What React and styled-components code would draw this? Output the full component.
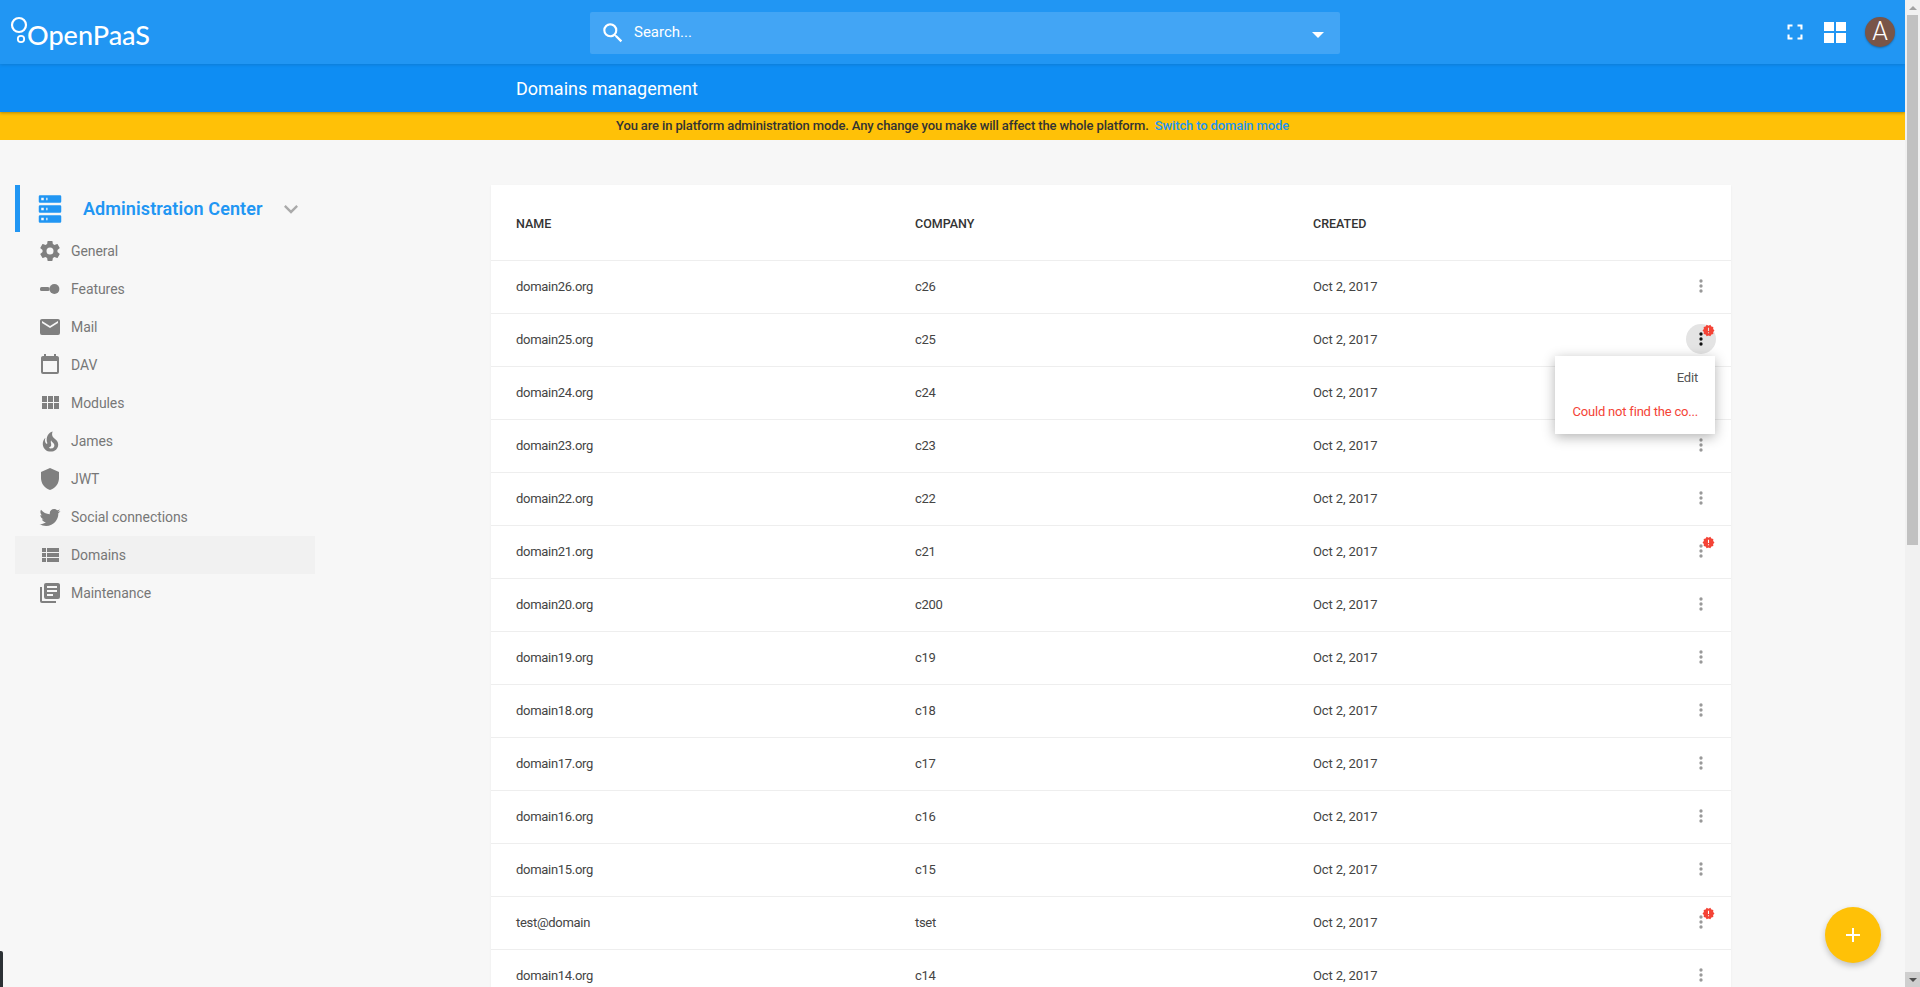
import React from 'react'
import styled, { createGlobalStyle } from 'styled-components'
import { MdSearch, MdKeyboardArrowDown } from 'react-icons/md'

const GlobalStyle = createGlobalStyle`
html, body {
    margin: 0;
    height: 100%;
    overflow: hidden;
    background: #f7f7f7;
    font-family: Roboto, "Liberation Sans", sans-serif;
}
`

const paths = {
    cog: 'M12,15.5A3.5,3.5 0 0,1 8.5,12A3.5,3.5 0 0,1 12,8.5A3.5,3.5 0 0,1 15.5,12A3.5,3.5 0 0,1 12,15.5M19.43,12.97C19.47,12.65 19.5,12.33 19.5,12C19.5,11.67 19.47,11.34 19.43,11L21.54,9.37C21.73,9.22 21.78,8.95 21.66,8.73L19.66,5.27C19.54,5.05 19.27,4.96 19.05,5.05L16.56,6.05C16.04,5.66 15.5,5.32 14.87,5.07L14.5,2.42C14.46,2.18 14.25,2 14,2H10C9.75,2 9.54,2.18 9.5,2.42L9.13,5.07C8.5,5.32 7.96,5.66 7.44,6.05L4.95,5.05C4.73,4.96 4.46,5.05 4.34,5.27L2.34,8.73C2.21,8.95 2.27,9.22 2.46,9.37L4.57,11C4.53,11.34 4.5,11.67 4.5,12C4.5,12.33 4.53,12.65 4.57,12.97L2.46,14.63C2.27,14.78 2.21,15.05 2.34,15.27L4.34,18.73C4.46,18.95 4.73,19.03 4.95,18.95L7.44,17.94C7.96,18.34 8.5,18.68 9.13,18.93L9.5,21.58C9.54,21.82 9.75,22 10,22H14C14.25,22 14.46,21.82 14.5,21.58L14.87,18.93C15.5,18.67 16.04,18.34 16.56,17.94L19.05,18.95C19.27,19.03 19.54,18.95 19.66,18.73L21.66,15.27C21.78,15.05 21.73,14.78 21.54,14.63L19.43,12.97Z',
    mail: 'M20,8L12,13L4,8V6L12,11L20,6M20,4H4C2.89,4 2,4.89 2,6V18A2,2 0 0,0 4,20H20A2,2 0 0,0 22,18V6C22,4.89 21.1,4 20,4Z',
    calendar: 'M19,19H5V8H19M16,1V3H8V1H6V3H5C3.89,3 3,3.89 3,5V19A2,2 0 0,0 5,21H19A2,2 0 0,0 21,19V5C21,3.89 20.1,3 19,3H18V1',
    modules: 'M16,5V11H21V5M10,11H15V5H10M16,18H21V12H16M10,18H15V12H10M4,18H9V12H4M4,11H9V5H4V11Z',
    fire: 'M17.55,11.2C17.32,10.9 17.05,10.64 16.79,10.38C16.14,9.78 15.39,9.35 14.76,8.72C13.3,7.26 13,4.85 13.91,3C13,3.23 12.16,3.75 11.46,4.32C8.92,6.4 7.92,10.07 9.12,13.22C9.16,13.32 9.2,13.42 9.2,13.55C9.2,13.77 9.05,13.97 8.85,14.05C8.63,14.15 8.39,14.09 8.21,13.93C8.15,13.88 8.11,13.83 8.06,13.76C6.96,12.33 6.78,10.28 7.54,8.64C5.89,10 5,12.3 5.14,14.47C5.18,14.97 5.24,15.47 5.41,15.97C5.55,16.57 5.81,17.17 6.13,17.7C7.17,19.43 9,20.67 10.97,20.92C13.07,21.19 15.32,20.8 16.93,19.32C18.73,17.66 19.38,15 18.43,12.72L18.3,12.46C18.1,12 17.83,11.59 17.5,11.2H17.55M14.45,17.5C14.17,17.74 13.72,18 13.37,18.1C12.27,18.5 11.17,17.94 10.5,17.28C11.69,17 12.4,16.12 12.61,15.23C12.78,14.43 12.46,13.77 12.33,13C12.21,12.26 12.23,11.63 12.5,10.94C12.69,11.32 12.89,11.7 13.13,12C13.9,13 15.11,13.44 15.37,14.8C15.41,14.94 15.43,15.08 15.43,15.23C15.46,16.05 15.1,16.95 14.45,17.5H14.45Z',
    shield: 'M12,1L3,5V11C3,16.55 6.84,21.74 12,23C17.16,21.74 21,16.55 21,11V5L12,1Z',
    twitter: 'M22.46,6C21.69,6.35 20.86,6.58 20,6.69C20.88,6.16 21.56,5.32 21.88,4.31C21.05,4.81 20.13,5.16 19.16,5.36C18.37,4.5 17.26,4 16,4C13.65,4 11.73,5.92 11.73,8.29C11.73,8.63 11.77,8.96 11.84,9.27C8.28,9.09 5.11,7.38 3,4.79C2.63,5.42 2.42,6.16 2.42,6.94C2.42,8.43 3.17,9.75 4.33,10.5C3.62,10.5 2.96,10.3 2.38,10C2.38,10 2.38,10 2.38,10.03C2.38,12.11 3.86,13.85 5.82,14.24C5.46,14.34 5.08,14.39 4.69,14.39C4.42,14.39 4.15,14.36 3.89,14.31C4.43,16 6,17.26 7.89,17.29C6.43,18.44 4.58,19.13 2.56,19.13C2.22,19.13 1.88,19.11 1.54,19.07C3.44,20.29 5.7,21 8.12,21C16,21 20.33,14.46 20.33,8.79C20.33,8.6 20.33,8.42 20.32,8.23C21.16,7.63 21.88,6.87 22.46,6Z',
    list: 'M9,5V9H21V5M9,19H21V15H9M9,14H21V10H9M4,9H8V5H4M4,19H8V15H4M4,14H8V10H4V14Z',
    books: 'M19,11H9V9H19M15,15H9V13H15M19,7H9V5H19M20,2H8A2,2 0 0,0 6,4V16A2,2 0 0,0 8,18H20A2,2 0 0,0 22,16V4C22,2.89 21.1,2 20,2M4,6H2V20A2,2 0 0,0 4,22H18V20H4V6Z',
    server: 'M4,1H20A1,1 0 0,1 21,2V6A1,1 0 0,1 20,7H4A1,1 0 0,1 3,6V2A1,1 0 0,1 4,1M4,9H20A1,1 0 0,1 21,10V14A1,1 0 0,1 20,15H4A1,1 0 0,1 3,14V10A1,1 0 0,1 4,9M4,17H20A1,1 0 0,1 21,18V22A1,1 0 0,1 20,23H4A1,1 0 0,1 3,22V18A1,1 0 0,1 4,17M9,5H10V3H9V5M9,13H10V11H9V13M9,21H10V19H9V21M5,3V5H7V3H5M5,11V13H7V11H5M5,19V21H7V19H5Z',
    decagram: 'M23,12L20.56,9.22L20.9,5.54L17.29,4.72L15.4,1.54L12,3L8.6,1.54L6.71,4.72L3.1,5.53L3.44,9.21L1,12L3.44,14.78L3.1,18.47L6.71,19.29L8.6,22.47L12,21L15.4,22.46L17.29,19.28L20.9,18.46L20.56,14.78L23,12M13,17H11V15H13V17M13,13H11V7H13V13Z',
    dots: 'M12,16A2,2 0 0,1 14,18A2,2 0 0,1 12,20A2,2 0 0,1 10,18A2,2 0 0,1 12,16M12,10A2,2 0 0,1 14,12A2,2 0 0,1 12,14A2,2 0 0,1 10,12A2,2 0 0,1 12,10M12,4A2,2 0 0,1 14,6A2,2 0 0,1 12,8A2,2 0 0,1 10,6A2,2 0 0,1 12,4Z',
    fullscreen: 'M3,3H9V5.5H5.5V9H3ZM15,3H21V9H18.5V5.5H15ZM3,15H5.5V18.5H9V21H3ZM18.5,15H21V21H15V18.5H18.5Z',
}

const Glyph = ({ name, size = 24, className }) => (
    <svg className={className} width={size} height={size} viewBox="0 0 24 24" fill="currentColor">
        <path d={paths[name]} />
    </svg>
)

const ToggleGlyph = ({ size = 24 }) => (
    <svg width={size} height={size} viewBox="0 0 24 24" fill="currentColor">
        <rect x="2" y="10" width="9.5" height="4" rx="1.5" />
        <circle cx="16.4" cy="12" r="5" />
    </svg>
)

const Page = styled.div`
display: flex;
height: 100vh;
position: relative;
overflow: hidden;
`

const Main = styled.div`
flex: 1;
min-width: 0;
overflow: hidden;
`

const ScrollTrack = styled.div`
width: 15px;
flex: none;
background: #f1f1f1;
display: flex;
flex-direction: column;
`

const ScrollArrow = styled.div`
height: 15px;
flex: none;
display: flex;
align-items: center;
justify-content: center;
background: ${p => (p.$down ? '#cfcfcf' : '#f1f1f1')};

&::after {
    content: '';
    border-left: 4px solid transparent;
    border-right: 4px solid transparent;
    ${p => (p.$down ? 'border-top: 4px solid #505050;' : 'border-bottom: 4px solid #a3a3a3;')}
}
`

const ScrollThumb = styled.div`
height: 530px;
flex: none;
margin: 0 2px 0 2px;
background: #c1c1c1;
`

const ScrollGap = styled.div`
flex: 1;
`

const Header = styled.header`
height: 64px;
background: #2196f3;
display: flex;
align-items: center;
position: relative;
box-shadow: 0 1px 3px rgba(0, 0, 0, 0.12);
z-index: 2;
`

const LogoBox = styled.div`
width: 590px;
height: 64px;
flex: none;
display: flex;
align-items: flex-start;
color: #fff;
`

const LogoMark = styled.svg`
flex: none;
margin: 15px 0 0 10px;
`

const LogoText = styled.span`
font-family: Lato, sans-serif;
font-size: 27px;
font-weight: 500;
line-height: 32px;
margin: 19px 0 0 -5px;
`

const Search = styled.div`
width: 750px;
height: 42px;
margin-top: 2px;
flex: none;
display: flex;
align-items: center;
background: #42a5f5;
border-radius: 2px;
color: #fff;
`

const SearchIcon = styled(MdSearch)`
margin: 0 8px 0 10px;
flex: none;
`

const SearchText = styled.span`
flex: 1;
font-size: 15px;
margin-top: -2px;
`

const Caret = styled.span`
margin: 3px 16px 0 0;
border-left: 6px solid transparent;
border-right: 6px solid transparent;
border-top: 6px solid #fff;
`

const HeaderTools = styled.div`
flex: 1;
display: flex;
align-items: center;
color: #fff;
padding-left: 445px;
`

const AppsGrid = styled.div`
display: grid;
grid-template-columns: 10px 10px;
grid-auto-rows: 9.5px;
gap: 2px;
margin-left: 19px;

span {
    background: #fff;
}
`

const Avatar = styled.div`
width: 30px;
height: 30px;
margin-left: 19px;
border-radius: 50%;
background: #795548;
color: #fff;
font-size: 25px;
font-weight: 300;
line-height: 30px;
text-align: center;
box-shadow: 0 1px 2px rgba(0, 0, 0, 0.3);
`

const SubHeader = styled.div`
height: 48px;
background: #0e8df3;
color: #fff;
font-size: 18px;
line-height: 50px;
padding-left: 516px;
position: relative;
z-index: 1;
box-shadow: 0 1px 3px rgba(0, 0, 0, 0.3);
`

const Banner = styled.div`
height: 28px;
background: #ffc107;
color: #333;
font-size: 13px;
font-weight: 500;
line-height: 28px;
letter-spacing: -0.13px;
text-align: center;
`

const BannerLink = styled.a`
color: #2196f3;
margin-left: 6px;
`

const Body = styled.div`
display: grid;
grid-template-columns: 300px 1240px;
column-gap: 176px;
padding: 45px 0 0 15px;
`

const SideTitle = styled.div`
height: 47px;
border-left: 5px solid #2196f3;
display: flex;
align-items: center;
color: #2196f3;
font-size: 18px;
font-weight: 600;
letter-spacing: 0.1px;
padding-left: 15px;
`

const TitleLabel = styled.span`
margin-left: 18px;
flex: none;
`

const TitleChevron = styled(MdKeyboardArrowDown)`
color: #aaa;
margin-left: 14px;
flex: none;
`

const NavItem = styled.div`
height: 38px;
display: flex;
align-items: center;
padding-left: 23px;
gap: 9px;
color: #777;
font-size: 14px;
letter-spacing: -0.07px;
background: ${p => (p.$active ? '#f1f1f1' : 'transparent')};

svg {
    flex: none;
    color: #808080;
}
`

const FlameGlyph = styled(Glyph)`
margin: 0 -1.5px;
`

const Card = styled.section`
background: #fff;
box-shadow: 0 1px 2px rgba(0, 0, 0, 0.06);
`

const Row = styled.div`
display: grid;
grid-template-columns: 399px 398px 1fr 45px;
align-items: center;
height: 52px;
padding-left: 25px;
border-top: 1px solid #eee;
color: #444;
font-size: 13px;
letter-spacing: -0.3px;
`

const HeadRow = styled(Row)`
height: 75px;
border-top: 0;
color: #333;
font-size: 12.5px;
font-weight: 500;
letter-spacing: 0;
text-transform: uppercase;
padding-top: 2px;
box-sizing: border-box;
`

const RowText = styled.span`
margin-top: -2px;
`

const DateText = styled(RowText)`
letter-spacing: -0.1px;
`

const DotsButton = styled.div`
position: relative;
width: 30px;
height: 30px;
border-radius: 50%;
display: flex;
align-items: center;
justify-content: center;
color: ${p => (p.$open ? '#111' : '#999')};
background: ${p => (p.$open ? '#e4e4e4' : 'transparent')};
margin-top: -3px;
`

const AlertBadge = styled(Glyph)`
position: absolute;
top: 0;
right: 1px;
color: #f44336;
`

const Popup = styled.div`
position: absolute;
top: 356px;
left: 1555px;
width: 160px;
height: 78px;
box-sizing: border-box;
padding: 10px 17px 0 0;
background: #fff;
box-shadow: 0 3px 12px rgba(0, 0, 0, 0.3);
font-size: 13px;
letter-spacing: -0.2px;
z-index: 3;
`

const PopupItem = styled.div`
height: 34px;
line-height: 24px;
text-align: right;
white-space: nowrap;
color: ${p => (p.$error ? '#f44336' : '#555')};
`

const Fab = styled.div`
position: absolute;
left: 1825px;
top: 907px;
width: 56px;
height: 56px;
border-radius: 50%;
background: #ffc107;
box-shadow: 0 3px 6px rgba(0, 0, 0, 0.22);
display: flex;
align-items: center;
justify-content: center;
z-index: 3;
`

const FabPlus = styled.svg`
display: block;
`

const DockEdge = styled.div`
position: absolute;
left: 0;
bottom: 0;
width: 3px;
height: 36px;
background: #2c3135;
border-top-right-radius: 2px;
`

const navItems = [
    { label: 'General', icon: <Glyph name="cog" /> },
    { label: 'Features', icon: <ToggleGlyph /> },
    { label: 'Mail', icon: <Glyph name="mail" /> },
    { label: 'DAV', icon: <Glyph name="calendar" /> },
    { label: 'Modules', icon: <Glyph name="modules" /> },
    { label: 'James', icon: <FlameGlyph name="fire" size={27} /> },
    { label: 'JWT', icon: <Glyph name="shield" /> },
    { label: 'Social connections', icon: <Glyph name="twitter" /> },
    { label: 'Domains', icon: <Glyph name="list" />, active: true },
    { label: 'Maintenance', icon: <Glyph name="books" /> },
]

const domains = [
    { name: 'domain26.org', company: 'c26' },
    { name: 'domain25.org', company: 'c25', alert: true, open: true },
    { name: 'domain24.org', company: 'c24' },
    { name: 'domain23.org', company: 'c23' },
    { name: 'domain22.org', company: 'c22' },
    { name: 'domain21.org', company: 'c21', alert: true },
    { name: 'domain20.org', company: 'c200' },
    { name: 'domain19.org', company: 'c19' },
    { name: 'domain18.org', company: 'c18' },
    { name: 'domain17.org', company: 'c17' },
    { name: 'domain16.org', company: 'c16' },
    { name: 'domain15.org', company: 'c15' },
    { name: 'test@domain', company: 'tset', alert: true },
    { name: 'domain14.org', company: 'c14' },
]

const App = () => (
    <Page>
        <GlobalStyle />
        <Main>
            <Header>
                <LogoBox>
                    <LogoMark width="22" height="36" viewBox="0 0 22 36" fill="none" stroke="currentColor">
                        <circle cx="9" cy="10" r="7" strokeWidth="2.2" />
                        <circle cx="11" cy="24" r="3.2" strokeWidth="1.8" />
                    </LogoMark>
                    <LogoText>OpenPaaS</LogoText>
                </LogoBox>
                <Search>
                    <SearchIcon size={26} />
                    <SearchText>Search...</SearchText>
                    <Caret />
                </Search>
                <HeaderTools>
                    <Glyph name="fullscreen" size={20} />
                    <AppsGrid>
                        <span /><span /><span /><span />
                    </AppsGrid>
                    <Avatar>A</Avatar>
                </HeaderTools>
            </Header>
            <SubHeader>Domains management</SubHeader>
            <Banner>
                You are in platform administration mode. Any change you make will affect the whole platform.
                <BannerLink>Switch to domain mode</BannerLink>
            </Banner>
            <Body>
                <nav>
                    <SideTitle>
                        <Glyph name="server" size={30} />
                        <TitleLabel>Administration Center</TitleLabel>
                        <TitleChevron size={28} />
                    </SideTitle>
                    {navItems.map(item => (
                        <NavItem key={item.label} $active={item.active}>
                            {item.icon}
                            {item.label}
                        </NavItem>
                    ))}
                </nav>
                <Card>
                    <HeadRow>
                        <span>Name</span>
                        <span>Company</span>
                        <span>Created</span>
                    </HeadRow>
                    {domains.map(d => (
                        <Row key={d.name}>
                            <RowText>{d.name}</RowText>
                            <RowText>{d.company}</RowText>
                            <DateText>Oct 2, 2017</DateText>
                            <DotsButton $open={d.open}>
                                <Glyph name="dots" size={20} />
                                {d.alert && <AlertBadge name="decagram" size={13} />}
                            </DotsButton>
                        </Row>
                    ))}
                </Card>
            </Body>
        </Main>
        <ScrollTrack>
            <ScrollArrow />
            <ScrollThumb />
            <ScrollGap />
            <ScrollArrow $down />
        </ScrollTrack>
        <Popup>
            <PopupItem>Edit</PopupItem>
            <PopupItem $error>Could not find the co...</PopupItem>
        </Popup>
        <Fab>
            <FabPlus width="14" height="14" viewBox="0 0 14 14" fill="#fff">
                <rect x="6" width="2" height="14" />
                <rect y="6" width="14" height="2" />
            </FabPlus>
        </Fab>
        <DockEdge />
    </Page>
)

export default App
